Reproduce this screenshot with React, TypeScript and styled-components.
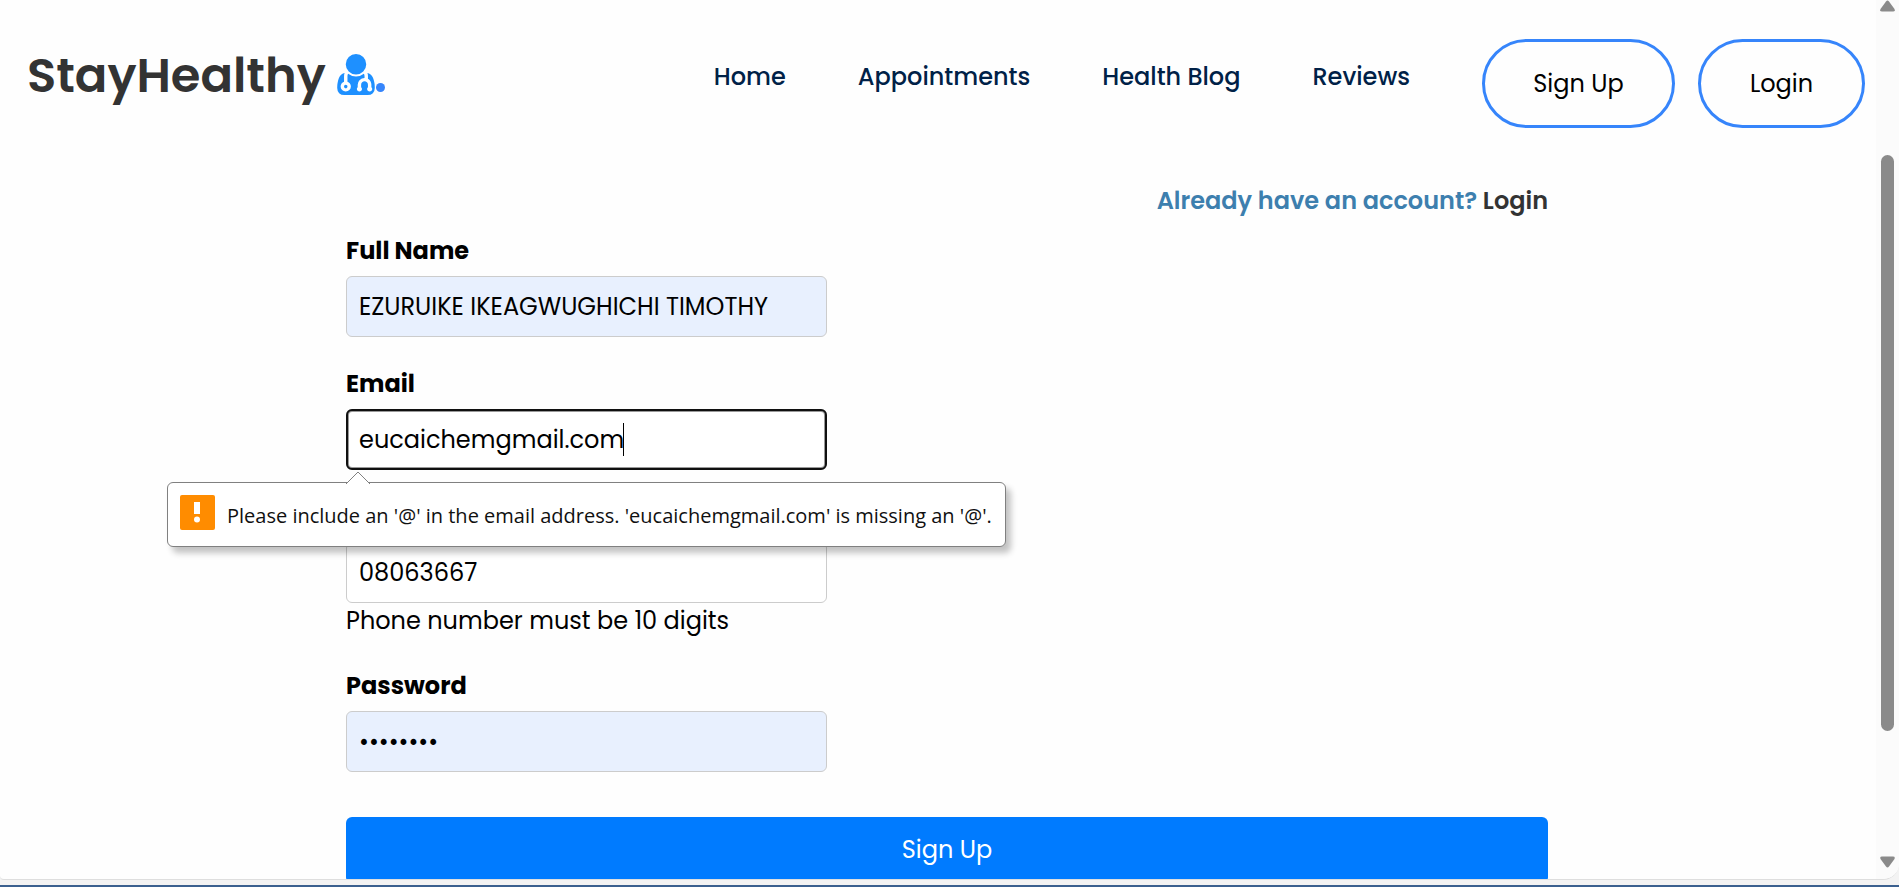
import { useEffect, useRef } from "react";
import type { ComponentProps } from "react";
import styled, { createGlobalStyle } from "styled-components";

const GlobalStyle = createGlobalStyle`
  *, *::before, *::after { box-sizing: border-box; }
  body {
    margin: 0;
    background: #f3f3f3;
    color: #000;
    font: 400 24px/36px Poppins, Inter, "Open Sans", sans-serif;
  }
`;

const Shell = styled.div`
  display: flex;
  flex-direction: column;
  height: 100vh;
  padding-bottom: 5px;
  border-bottom: 2px solid #3b608f;
`;

const Viewport = styled.div`
  display: flex;
  flex: 1;
  min-height: 0;
  background: #fefefe;
  border-bottom: 1px solid #dedede;
  border-radius: 0 0 16px 4px;
  overflow: hidden;
`;

const Page = styled.div`
  flex: 1;
  min-width: 0;
  overflow: hidden;
`;

const Header = styled.header`
  display: flex;
  justify-content: space-between;
  align-items: flex-start;
  padding: 39px 11px 0 27px;
`;

const Brand = styled.a`
  display: flex;
  align-items: baseline;
  color: #333;
  font-size: 48px;
  font-weight: 600;
  line-height: 74px;
  text-decoration: none;
`;

const DoctorIcon = styled.svg`
  width: 38px;
  height: 41px;
  margin-left: 11px;
  fill: #1e90ff;
  transform: translateY(3px);
`;

const BrandDot = styled.span`
  width: 9px;
  height: 9px;
  margin-left: 1px;
  border-radius: 50%;
  background: #3685fb;
`;

const Nav = styled.nav`
  display: flex;
  align-items: flex-start;
`;

const NavLink = styled.a`
  margin: 20px 72px 0 0;
  color: #002147;
  font-weight: 500;
  text-decoration: none;
  white-space: nowrap;
`;

const Pill = styled.button<{ $width: number }>`
  width: ${(p) => p.$width}px;
  height: 89px;
  border: 3px solid #3685fb;
  border-radius: 45px;
  background: transparent;
  color: #000;
  font: inherit;

  & + & { margin-left: 23px; }
`;

const Content = styled.main`
  padding: 55px 0 0 18px;
`;

const Form = styled.form`
  display: flex;
  flex-direction: column;
  max-width: 1202px;
  margin: 0 auto;
`;

const Prompt = styled.p`
  margin: 0 0 14px;
  color: #3d7fae;
  font-weight: 600;
  text-align: right;

  a {
    color: #333;
    text-decoration: none;
  }
`;

const Field = styled.div`
  position: relative;
  display: flex;
  flex-direction: column;
  width: 40%;
  margin-bottom: 29px;
`;

const Label = styled.label<{ $covered?: boolean }>`
  margin-bottom: 7px;
  font-weight: 700;
  visibility: ${(p) => (p.$covered ? "hidden" : "visible")};
`;

const Input = styled.input<{ $filled?: boolean }>`
  width: 100%;
  height: 61px;
  padding: 0 12px;
  border: 1px solid #ccc;
  border-radius: 6px;
  background: ${(p) => (p.$filled ? "#e8f0fe" : "#fff")};
  color: #000;
  font: inherit;
  caret-color: transparent;

  &:focus {
    outline: 2px solid #101010;
    outline-offset: -2px;
    box-shadow: inset 0 0 0 2px #999;
  }
`;

const Caret = styled.span`
  position: absolute;
  top: 57px;
  left: 277px;
  width: 1px;
  height: 33px;
  background: #000;
`;

const Submit = styled.button`
  height: 66px;
  margin-top: 16px;
  border: 0;
  border-radius: 6px;
  background: #007bff;
  color: #fff;
  font: inherit;
`;

const Bubble = styled.div`
  position: absolute;
  z-index: 1;
  top: 116px;
  left: -179px;
  display: flex;
  align-items: center;
  gap: 12px;
  width: 839px;
  height: 65px;
  padding: 0 12px;
  border: 1px solid #808080;
  border-radius: 6px;
  background: #fff;
  box-shadow: 5px 6px 6px rgba(0, 0, 0, 0.24);
  color: #101010;
  font: 400 20px/28px "Segoe UI", "Open Sans", "Noto Sans", sans-serif;
  white-space: nowrap;
`;

const BubbleText = styled.span`
  padding-top: 2px;
`;

const BubbleArrow = styled.svg`
  position: absolute;
  top: -12px;
  left: 178px;
  width: 24px;
  height: 13px;
`;

const WarningIcon = styled.svg`
  flex: none;
  width: 35px;
  height: 35px;
  margin-bottom: 4px;
`;

const Scrollbar = styled.div`
  display: flex;
  flex-direction: column;
  align-items: center;
  width: 23px;
  padding: 0 0 11px;
  background: #fbfbfb;

  svg {
    width: 15px;
    height: 12px;
    fill: #8a8a8a;
  }
`;

const Track = styled.div`
  display: flex;
  flex: 1;
  flex-direction: column;
  width: 13px;
  padding: 143px 0 125px;
`;

const Thumb = styled.div`
  flex: 1;
  border-radius: 7px;
  background: #8a8a8a;
`;

type TextFieldProps = ComponentProps<typeof Input> & { id: string; label: string; covered?: boolean };

const TextField = ({ id, label, covered, children, ...rest }: TextFieldProps) => (
  <Field>
    <Label htmlFor={id} $covered={covered}>{label}</Label>
    <Input id={id} aria-label={label} {...rest} />
    {children}
  </Field>
);

const NAV_ITEMS = ["Home", "Appointments", "Health Blog", "Reviews"];

export default function App() {
  const email = useRef<HTMLInputElement>(null);

  useEffect(() => {
    email.current?.focus({ preventScroll: true });
    const end = email.current?.value.length ?? 0;
    email.current?.setSelectionRange(end, end);
  }, []);

  return (
    <Shell>
      <GlobalStyle />
      <Viewport>
        <Page>
          <Header>
            <Brand href="#">
              StayHealthy
              <DoctorIcon viewBox="192 128 1408 1536" aria-hidden="true">
                <path d="M576 1344q0 26-19 45t-45 19-45-19-19-45 19-45 45-19 45 19 19 45zM1600 1405q0 121-73 190t-194 69h-874q-121 0-194-69t-73-190q0-68 5.5-131t24-138 47.5-132.5 81-103 120-60.5q-22 52-22 120v203q-58 20-93 70t-35 111q0 80 56 136t136 56 136-56 56-136q0-61-35.500-111t-92.500-70v-203q0-62 25-93 132 104 295 104t295-104q25 31 25 93v64q-106 0-181 75t-75 181v89q-32 29-32 71 0 40 28 68t68 28 68-28 28-68q0-42-32-71v-89q0-52 38-90t90-38 90 38 38 90v89q-32 29-32 71 0 40 28 68t68 28 68-28 28-68q0-42-32-71v-89q0-68-34.500-127.500t-93.500-93.500q0-10 .5-42.500t0-48-2.500-41.500-7-47-13-40q68 15 120 60.500t81 103 47.500 132.500 24 138 5.500 131zM1280 512q0 159-112.500 271.500T896 896 624.500 783.500 512 512t112.500-271.500T896 128t271.500 112.500T1280 512z" />
              </DoctorIcon>
              <BrandDot />
            </Brand>
            <Nav>
              {NAV_ITEMS.map((item) => (
                <NavLink key={item} href="#">{item}</NavLink>
              ))}
              <Pill type="button" $width={193}>Sign Up</Pill>
              <Pill type="button" $width={167}>Login</Pill>
            </Nav>
          </Header>
          <Content>
            <Form noValidate onSubmit={(e) => e.preventDefault()}>
              <Prompt>
                Already have an account? <a href="#">Login</a>
              </Prompt>
              <TextField id="name" label="Full Name" $filled defaultValue="EZURUIKE IKEAGWUGHICHI TIMOTHY" />
              <TextField id="email" label="Email" ref={email} defaultValue="eucaichemgmail.com">
                <Caret />
                <Bubble role="alert">
                  <BubbleArrow viewBox="0 0 24 13" aria-hidden="true">
                    <path d="M0 13 L12 1 L24 13" fill="#fff" stroke="#808080" />
                  </BubbleArrow>
                  <WarningIcon viewBox="0 0 35 35" aria-hidden="true">
                    <rect width="35" height="35" rx="2" fill="#ff8c00" />
                    <rect x="14" y="7" width="6" height="12" fill="#fff" />
                    <circle cx="17" cy="24.500" r="3" fill="#fff" />
                  </WarningIcon>
                  <BubbleText>
                    Please include an '@' in the email address. 'eucaichemgmail.com' is missing an '@'.
                  </BubbleText>
                </Bubble>
              </TextField>
              <TextField id="phone" label="Phone" covered type="tel" defaultValue="08063667">
                <span>Phone number must be 10 digits</span>
              </TextField>
              <TextField id="password" label="Password" type="password" $filled defaultValue="password" />
              <Submit type="submit">Sign Up</Submit>
            </Form>
          </Content>
        </Page>
        <Scrollbar aria-hidden="true">
          <svg viewBox="0 0 15 12"><path d="M6 1.500q1.500-2 3 0l5.500 7.500q1 2.500-1.500 2.500H2q-2.500 0-1.500-2.500z" /></svg>
          <Track><Thumb /></Track>
          <svg viewBox="0 0 15 12"><path d="M6 10.500q1.500 2 3 0l5.500-7.500q1-2.500-1.500-2.500H2q-2.500 0-1.500 2.500z" /></svg>
        </Scrollbar>
      </Viewport>
    </Shell>
  );
}
